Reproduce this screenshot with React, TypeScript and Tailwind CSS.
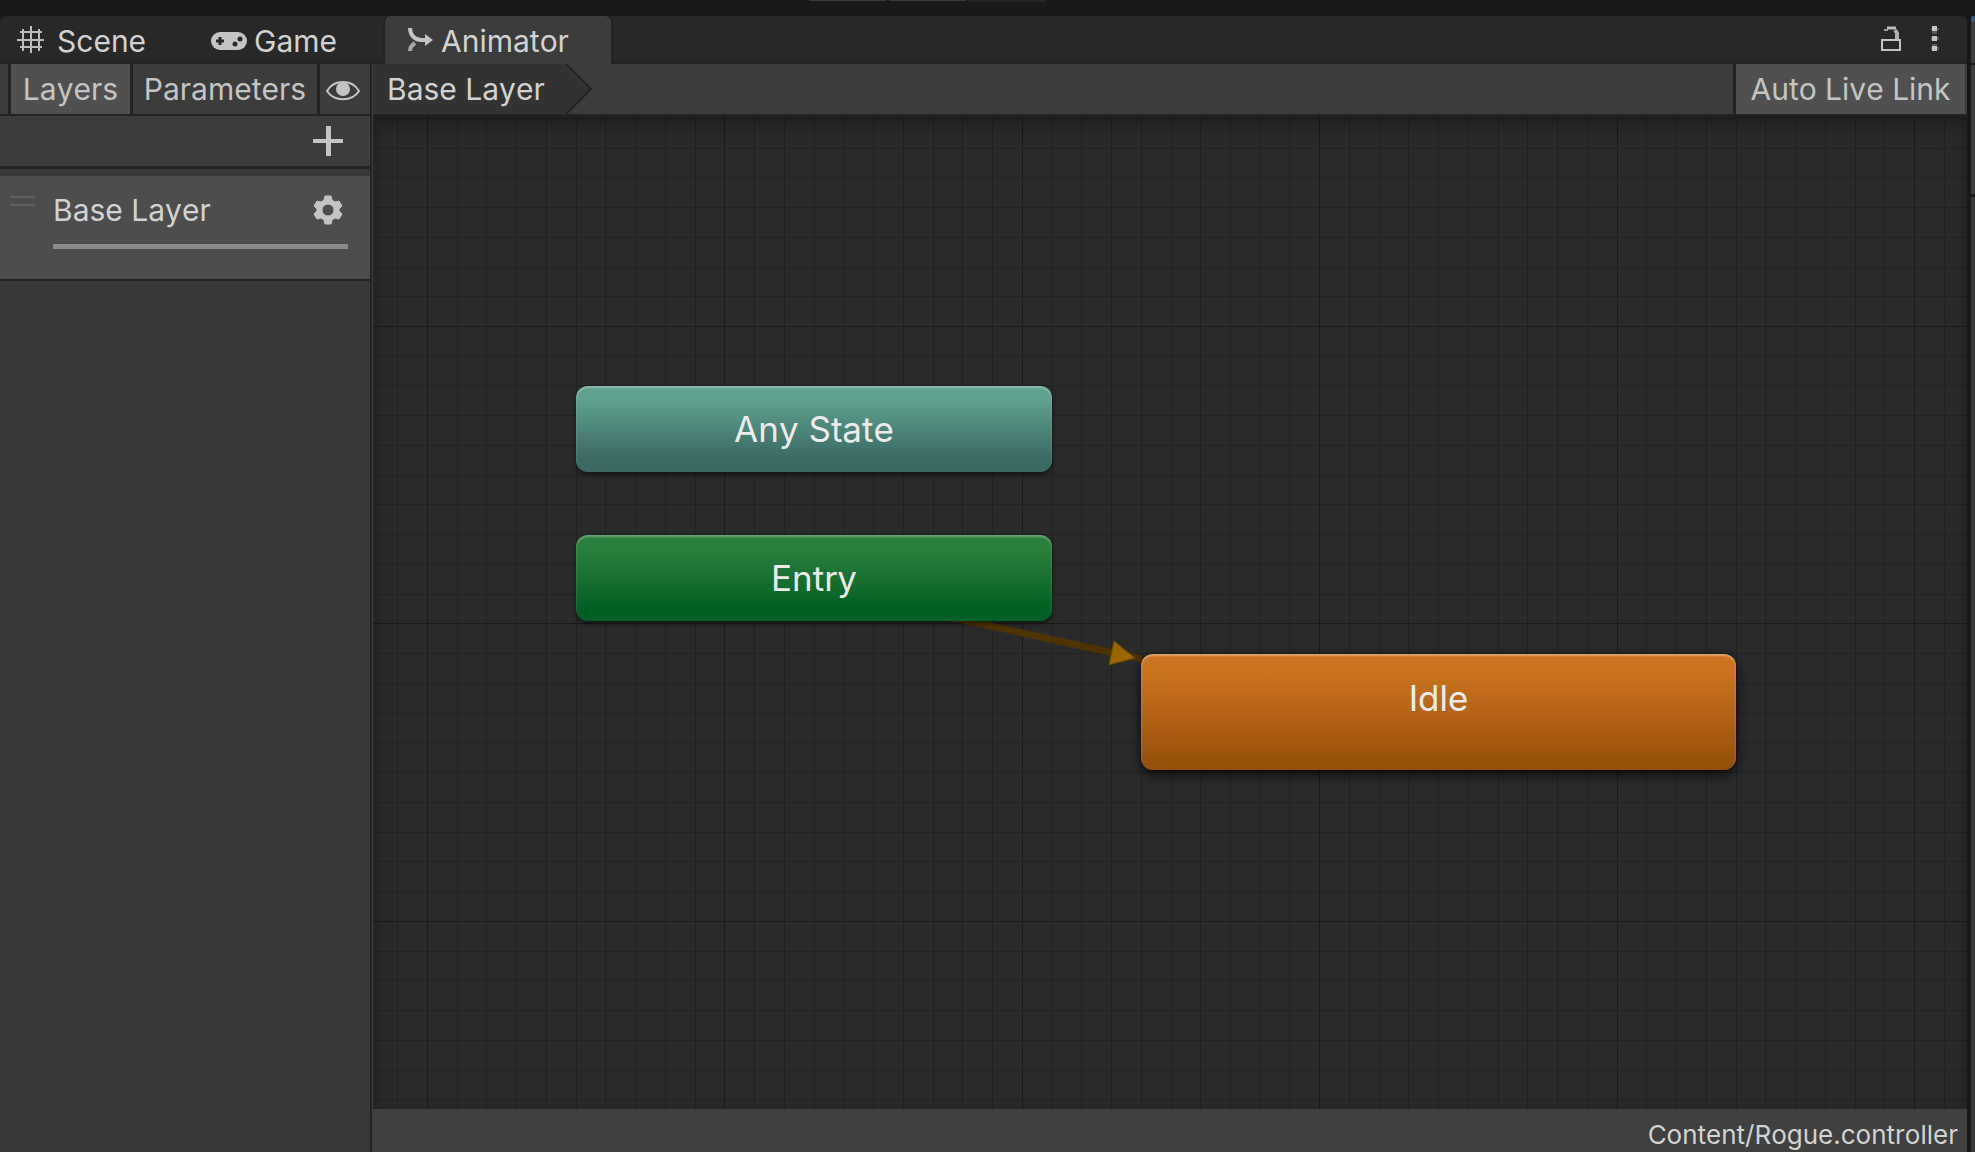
import React from "react";

const FONT = "font-['Inter',sans-serif] [font-kerning:none]";

const GRID_STEPS = Array.from({ length: 110 }, (_, i) => i);
const CELL = 297.4 / 10;

function GridLines() {
  return (
    <svg className="absolute inset-0 h-full w-full" aria-hidden="true" shapeRendering="crispEdges">
      {GRID_STEPS.map((i) => (
        <rect
          key={`v${i}`}
          x={Math.round(54 + (i - 1) * CELL)}
          y={0}
          width={1}
          height="100%"
          fill={(i - 1) % 10 === 0 ? "#1a1a1a" : "#222222"}
        />
      ))}
      {GRID_STEPS.map((i) => (
        <rect
          key={`h${i}`}
          x={0}
          y={Math.round(210 + (i - 7) * CELL)}
          width="100%"
          height={1}
          fill={(i - 7) % 10 === 0 ? "#1a1a1a" : "#222222"}
        />
      ))}
    </svg>
  );
}

function SceneIcon() {
  return (
    <svg width="28" height="28" viewBox="0 0 28 28" fill="none" stroke="#bcbcbc" strokeWidth="2" aria-hidden="true">
      <path d="M6 3v22M14 0v27M22 3v22M3 6h22M0 14h27M3 21h22" />
    </svg>
  );
}

function GameIcon() {
  return (
    <svg width="36" height="18" viewBox="0 0 36 18" aria-hidden="true">
      <rect width="36" height="18" rx="9" fill="#c4c4c4" />
      <path d="M9 5v8M5 9h8" stroke="#282828" strokeWidth="3" />
      <circle cx="24" cy="12" r="2.5" fill="#282828" />
      <circle cx="29" cy="7" r="2.5" fill="#282828" />
    </svg>
  );
}

function AnimatorIcon() {
  return (
    <svg width="26" height="24" viewBox="0 0 26 24" fill="none" aria-hidden="true">
      <path d="M3 0C3 7 8 12 14 12H20" stroke="#c4c4c4" strokeWidth="4" />
      <path d="M3 23C3 19 5 17 8 15" stroke="#a8a8a8" strokeWidth="4" />
      <path d="M18 6l8 6l-8 6z" fill="#c4c4c4" />
    </svg>
  );
}

function EyeIcon() {
  return (
    <svg width="36" height="22" viewBox="0 0 36 22" fill="none" aria-hidden="true">
      <path d="M2 11C9-1 27-1 34 11C27 22 9 22 2 11Z" stroke="#c4c4c4" strokeWidth="2" />
      <circle cx="18" cy="9" r="7" fill="#c4c4c4" />
    </svg>
  );
}

function PlusIcon() {
  return (
    <svg width="30" height="30" viewBox="0 0 30 30" aria-hidden="true">
      <path d="M13 0h5v13h12v4H18v13h-5V17H0v-4h13z" fill="#c4c4c4" />
    </svg>
  );
}

function GearIcon() {
  return (
    <svg width="30" height="30" viewBox="0 0 30 30" aria-hidden="true">
      <path
        fill="#c4c4c4"
        stroke="#c4c4c4"
        strokeLinejoin="round"
        fillRule="evenodd"
        d="M12 1h6l1 4l3 2l4-1l3 5l-3 3v2l3 3l-3 5l-4-1l-3 2l-1 4h-6l-1-4l-3-2l-4 1l-3-5l3-3v-2l-3-3l3-5l4 1l3-2zM15 9a6 6 0 1 0 0 12a6 6 0 1 0 0-12z"
      />
    </svg>
  );
}

function LockIcon() {
  return (
    <svg width="20" height="26" viewBox="0 0 20 26" fill="none" aria-hidden="true">
      <path d="M1 14h18v10H1z" stroke="#c4c4c4" strokeWidth="2" />
      <path d="M3 4h4" stroke="#a0a0a0" strokeWidth="2" />
      <path d="M6 2h9" stroke="#bcbcbc" strokeWidth="3" />
      <path d="M14 4l2 3v6" stroke="#b0b0b0" strokeWidth="4" />
    </svg>
  );
}

function MenuIcon() {
  return (
    <svg width="8" height="26" viewBox="0 0 8 26" fill="#c4c4c4" aria-hidden="true">
      <path d="M1 0h5v5H1zM1 10h5v5H1zM1 20h5v5H1z" />
      <path d="M0 2h8v2H0zM0 11h8v3H0zM0 21h8v3H0zM1 5h5v3H1zM1 18h5v2H1z" opacity="0.3" />
    </svg>
  );
}

function TabBar() {
  return (
    <header className="flex h-12 shrink-0 items-stretch rounded-t-md bg-[#282828] text-[30px] text-[#d2d2d2] shadow-[inset_0_-3px_0_#232323]">
      <div role="tablist" className="flex">
        <button role="tab" aria-selected="false" className="flex w-[195px] items-center gap-3 pl-[17px] pt-[2px] text-left">
          <span className="pb-[2px]">
            <SceneIcon />
          </span>
          Scene
        </button>
        <button role="tab" aria-selected="false" className="flex w-[190px] items-center gap-[7px] pl-4 pt-[2px] text-left">
          <GameIcon />
          Game
        </button>
        <button
          role="tab"
          aria-selected="true"
          className="flex w-[226px] items-center gap-2 rounded-t-md bg-[#3c3c3c] pl-[22px] pt-[2px] text-left shadow-[0_0_0_2px_#232323] [clip-path:inset(0_-3px_0_-3px)]"
        >
          <span className="pb-[2px]">
            <AnimatorIcon />
          </span>
          Animator
        </button>
      </div>
      <div className="ml-auto flex items-center gap-[30px] pb-[2px] pr-[28px]">
        <button aria-label="Lock">
          <LockIcon />
        </button>
        <button aria-label="More options">
          <MenuIcon />
        </button>
      </div>
    </header>
  );
}

function LayersPanel() {
  return (
    <aside className="flex w-[372px] shrink-0 flex-col border-r-2 border-[#232323] bg-[#383838]">
      <div className="flex h-[52px] items-stretch border-b-2 border-[#232323] bg-[#3c3c3c] text-[30px] text-[#c4c4c4]">
        <div className="w-2" />
        <button aria-pressed="true" className="w-[125px] border-x-3 border-[#232323] bg-[#505050] text-center">
          Layers
        </button>
        <button aria-pressed="false" className="w-[187px] border-r-3 border-[#232323] text-center">
          Parameters
        </button>
        <button aria-label="Toggle panel" className="flex flex-1 items-center justify-center pr-1 pt-1">
          <EyeIcon />
        </button>
      </div>
      <div className="flex h-[53px] items-center justify-end border-b-3 border-[#232323] bg-[#3c3c3c] pr-[27px]">
        <button aria-label="Add layer">
          <PlusIcon />
        </button>
      </div>
      <ul className="pt-[7px]">
        <li className="flex h-[105px] border-b-2 border-[#232323] bg-[#4d4d4d]">
          <span className="ml-[10px] mt-5 h-[10px] w-[25px] border-y-2 border-[#626262]" />
          <div className="ml-[18px] w-[295px]">
            <div className="flex h-[68px] items-center justify-between pr-[5px] text-[30px] text-[#d2d2d2]">
              Base Layer
              <button aria-label="Layer settings">
                <GearIcon />
              </button>
            </div>
            <div className="h-[5px] bg-[#8a8a8a]" />
          </div>
        </li>
      </ul>
    </aside>
  );
}

function Breadcrumb() {
  return (
    <div className="flex h-[52px] shrink-0 items-stretch border-b-2 border-[#232323] bg-[#3c3c3c] text-[30px]">
      <nav className="flex" aria-label="Breadcrumb">
        <a href="#base-layer" className="flex w-[190px] items-center bg-[#333333] pl-[14px] text-[#d2d2d2]">
          Base Layer
        </a>
        <svg width="30" height="50" viewBox="0 0 30 50" aria-hidden="true">
          <path d="M0 0h3l25 25l-25 25H0z" fill="#333333" />
          <path d="M3 0l25 25l-25 25" fill="none" stroke="#232323" strokeWidth="2" />
        </svg>
      </nav>
      <button
        aria-pressed="true"
        className="ml-auto mr-[2px] w-[232px] border-l-3 border-[#232323] bg-[#505050] text-center text-[#c4c4c4]"
      >
        Auto Live Link
      </button>
    </div>
  );
}

function Graph() {
  return (
    <main className="relative min-h-0 flex-1 overflow-hidden bg-[#2a2a2a] text-[35px] leading-10 text-[#ebebeb]">
      <GridLines />
      <div className="absolute inset-0 shadow-[inset_0_8px_20px_rgba(0,0,0,0.3)]" />
      <svg className="absolute left-[567px] top-[490px]" width="220" height="70" viewBox="0 0 220 70" aria-hidden="true">
        <path d="M0 9L202 53" stroke="#4d3300" strokeWidth="7" />
        <path d="M174 35L195 52L169 59z" fill="#996600" stroke="#6b4700" strokeWidth="1" />
      </svg>
      <div className="absolute left-[203px] top-[270px] flex h-[86px] w-[476px] items-center justify-center rounded-xl bg-linear-to-b from-[#60a18f] from-15% to-[#3b6a65] to-85% shadow-[inset_0_2px_2px_rgba(255,255,255,0.3),0_3px_5px_rgba(0,0,0,0.5)]">
        Any State
      </div>
      <div className="absolute left-[203px] top-[419px] flex h-[86px] w-[476px] items-center justify-center rounded-xl bg-linear-to-b from-[#29803c] from-15% to-[#006025] to-85% shadow-[inset_0_2px_2px_rgba(255,255,255,0.3),0_3px_5px_rgba(0,0,0,0.5)]">
        Entry
      </div>
      <div className="absolute left-[768px] top-[538px] flex h-[116px] w-[595px] justify-center rounded-xl bg-linear-to-b from-[#cb741f] from-15% to-[#934e0b] pt-6 shadow-[inset_0_2px_2px_rgba(255,255,255,0.35),0_4px_12px_rgba(0,0,0,0.8)]">
        Idle
      </div>
    </main>
  );
}

export default function App() {
  return (
    <div className={`flex h-screen flex-col overflow-hidden bg-[#191919] ${FONT}`}>
      <div className="flex h-4 shrink-0 justify-center gap-[3px] pr-[121px]">
        <span className="h-px w-[77px] bg-[#3a3a3a]" />
        <span className="h-px w-[77px] bg-[#3a3a3a]" />
        <span className="h-[2px] w-[77px] bg-[#242424]" />
      </div>
      <div className="flex min-h-0 flex-1">
        <div className="flex min-w-0 flex-1 flex-col">
          <TabBar />
          <div className="flex min-h-0 flex-1">
            <LayersPanel />
            <section className="flex min-w-0 flex-1 flex-col border-l border-[#404040]">
              <Breadcrumb />
              <Graph />
              <footer className="flex h-[43px] shrink-0 items-center justify-end bg-[#404040] pr-[9px] pt-2 text-[26px] text-[#d2d2d2]">
                Content/Rogue.controller
              </footer>
            </section>
          </div>
        </div>
        <div className="ml-[4px] flex w-1 flex-col bg-[#383838]">
          <div className="h-[6px] rounded-tl-md bg-[#2c5d87]" />
          <div className="h-[41px] bg-[#3c3c3c]" />
          <div className="h-[2px] bg-[#191919]" />
          <div className="h-[129px] bg-[#3c3c3c]" />
          <div className="h-[3px] bg-[#191919]" />
        </div>
      </div>
    </div>
  );
}
